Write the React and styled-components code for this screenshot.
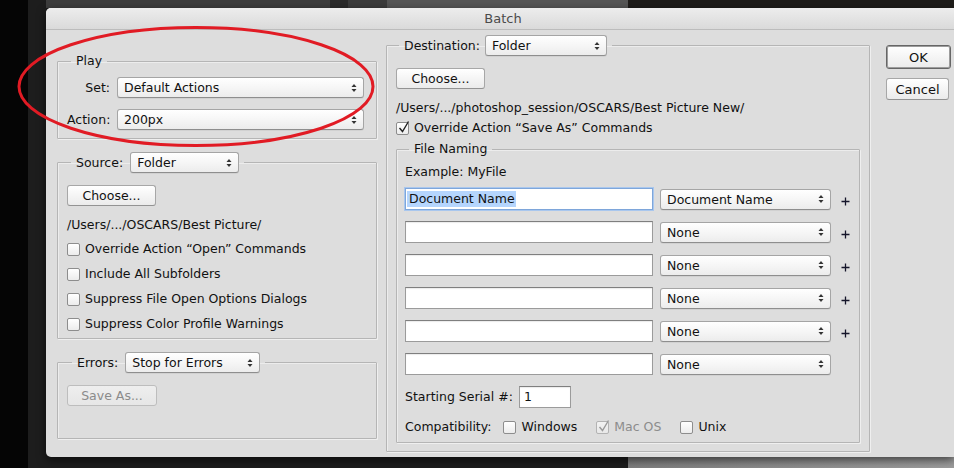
import React from "react";
import styled, { createGlobalStyle, css } from "styled-components";

const GlobalStyle = createGlobalStyle`
  html, body { margin: 0; padding: 0; background: #1d1d1d; }
  body { font-family: "DejaVu Sans", "Liberation Sans", sans-serif; font-size: 12.5px; color: #111; }
  * { box-sizing: border-box; }
`;

const Page = styled.div`
  position: relative;
  width: 954px;
  height: 468px;
  overflow: hidden;
  display: flex;
  flex-direction: column;
  background: linear-gradient(to right, #050505 0 28px, #1d1d1d 28px 628px, #7e7e7e 628px, #9d9d9d 954px);
`;

const TopStrip = styled.div`
  height: 8px;
  margin-left: 46px;
  display: flex;
`;

const Strip = styled.div`
  width: ${(p) => (p.$w ? `${p.$w}px` : "auto")};
  flex: ${(p) => (p.$w ? "none" : "1")};
  background: ${(p) => p.$bg};
`;

const Dialog = styled.div`
  margin-left: 46px;
  width: 908px;
  height: 449px;
  background: #dddddd;
  border-radius: 5px 0 0 5px;
  box-shadow: 0 3px 10px rgba(0, 0, 0, 0.6);
  display: flex;
  flex-direction: column;
  overflow: hidden;
`;

const TitleBar = styled.div`
  height: 22px;
  line-height: 21px;
  text-align: center;
  font-size: 13px;
  color: #4b4b4b;
  background: linear-gradient(#ededed, #dadada);
  border-bottom: 1px solid #bcbcbc;
  padding-left: 6px;
`;

const Body = styled.div`
  flex: 1;
  display: flex;
  align-items: flex-start;
  padding-left: 11px;
`;

const LeftColumn = styled.div`
  width: 320px;
  padding-top: 23px;
  display: flex;
  flex-direction: column;
  gap: 13px;
`;

const RightColumn = styled.div`
  width: 484px;
  margin-left: 9px;
  padding-top: 5px;
`;

const ButtonColumn = styled.div`
  margin-left: 16px;
  padding-top: 15px;
  display: flex;
  flex-direction: column;
  align-items: flex-start;
  gap: 9px;
`;

const Group = styled.fieldset`
  margin: 0;
  min-width: 0;
  border: 1px solid #b5b5b5;
  border-radius: 1px;
  box-shadow: 1px 1px 0 #efefef, inset 1px 1px 0 #ececec;
  padding: ${(p) => p.$pad};
  ${(p) => p.$mt && css`margin-top: ${p.$mt}px;`}
`;

const Legend = styled.legend`
  margin-left: ${(p) => p.$ml ?? 4}px;
  padding: 0 5px;
  line-height: 16px;
  display: flex;
  align-items: center;
  gap: ${(p) => p.$gap || 7}px;
`;

const FormGrid = styled.div`
  display: grid;
  grid-template-columns: 43px 1fr;
  column-gap: 7px;
  row-gap: 11px;
  align-items: center;
`;

const RightLabel = styled.span`
  text-align: right;
  line-height: 16px;
`;

const SelectBox = styled.div`
  position: relative;
  height: 21px;
  width: ${(p) => (p.$w ? `${p.$w}px` : "100%")};
  border: 1px solid #a5a5a5;
  border-bottom-color: #8e8e8e;
  border-radius: 3px;
  background: linear-gradient(#ffffff, #f5f5f5 55%, #ececec);
  box-shadow: 0 1px 0 rgba(0, 0, 0, 0.05);
  padding: 0 20px 0 6px;
  display: flex;
  align-items: center;
  white-space: nowrap;
  color: #111;
`;

const ArrowWrap = styled.span`
  position: absolute;
  right: 6px;
  top: 50%;
  transform: translateY(-50%);
  display: flex;
`;

const Arrows = () => (
  <ArrowWrap>
    <svg width="6" height="9" viewBox="0 0 6 9">
      <path d="M0.5 3.5 L3 0.5 L5.5 3.5 Z" fill="#333" />
      <path d="M0.5 5.5 L3 8.5 L5.5 5.5 Z" fill="#333" />
    </svg>
  </ArrowWrap>
);

const Select = ({ value, w }) => (
  <SelectBox $w={w}>
    {value}
    <Arrows />
  </SelectBox>
);

const Button = styled.div`
  width: ${(p) => p.$w}px;
  height: ${(p) => p.$h || 21}px;
  border: 1px solid #a7a7a7;
  border-bottom-color: #939393;
  border-radius: 3px;
  background: linear-gradient(#ffffff, #f3f3f3 60%, #ebebeb);
  display: flex;
  align-items: center;
  justify-content: center;
  font-size: ${(p) => p.$fs || 12.5}px;
  color: #111;
  ${(p) =>
    p.$disabled &&
    css`
      color: #8b8b8b;
      border-color: #bdbdbd;
      background: linear-gradient(#eeeeee, #e6e6e6);
    `}
  ${(p) =>
    p.$default &&
    css`
      border: 1px solid #666;
      box-shadow: inset 0 0 0 1px #9c9c9c;
    `}
`;

const Text = styled.div`
  line-height: 16px;
  margin-top: ${(p) => p.$mt || 0}px;
  padding-left: ${(p) => p.$pl || 0}px;
  color: ${(p) => (p.$muted ? "#8b8b8b" : "#111")};
  white-space: nowrap;
`;

const CheckList = styled.div`
  display: flex;
  flex-direction: column;
  gap: 9px;
  margin-top: ${(p) => p.$mt || 0}px;
`;

const CheckRow = styled.label`
  display: flex;
  align-items: center;
  gap: 5px;
  line-height: 16px;
  white-space: nowrap;
  color: ${(p) => (p.$disabled ? "#8c8c8c" : "#111")};
  margin-top: ${(p) => p.$mt || 0}px;
`;

const Box = styled.span`
  position: relative;
  width: 13px;
  height: 13px;
  flex: none;
  border: 1px solid ${(p) => (p.$disabled ? "#b3b3b3" : "#8d8d8d")};
  border-radius: 2px;
  background: ${(p) => (p.$disabled ? "linear-gradient(#f2f2f2, #e8e8e8)" : "linear-gradient(#ffffff, #ececec)")};
`;

const CheckMark = styled.svg`
  position: absolute;
  left: 1px;
  top: -3px;
`;

const Checkbox = ({ checked, disabled, children, mt }) => (
  <CheckRow $disabled={disabled} $mt={mt}>
    <Box $disabled={disabled}>
      {checked && (
        <CheckMark width="13" height="14" viewBox="0 0 13 14">
          <path
            d="M1.5 8 L4.5 11.5 L10.5 1.5"
            fill="none"
            stroke={disabled ? "#9a9a9a" : "#222"}
            strokeWidth="1.4"
          />
        </CheckMark>
      )}
    </Box>
    {children}
  </CheckRow>
);

const NamingGrid = styled.div`
  display: grid;
  grid-template-columns: 248px 171px auto;
  column-gap: 7px;
  row-gap: 11px;
  align-items: center;
  margin-top: 8px;
`;

const Field = styled.div`
  height: 22px;
  width: ${(p) => (p.$w ? `${p.$w}px` : "100%")};
  background: #fff;
  border: 1px solid #9b9b9b;
  border-top-color: #7f7f7f;
  box-shadow: inset 0 1px 1px rgba(0, 0, 0, 0.08);
  padding: 0 5px 0 1px;
  display: flex;
  align-items: center;
  white-space: nowrap;
  ${(p) =>
    p.$focused &&
    css`
      border-color: #7ea6da;
      box-shadow: 0 0 0 1px #a9c7ee;
    `}
`;

const Selection = styled.span`
  background: #b5d5fd;
  padding: 0 1px 0 2px;
  line-height: 16px;
`;

const PlusIcon = styled.svg`
  margin-left: 3px;
  margin-top: 4px;
`;

const Plus = () => (
  <PlusIcon width="9" height="9" viewBox="0 0 9 9">
    <path d="M4.5 0.5 V8.5 M0.5 4.5 H8.5" stroke="#15152a" strokeWidth="1.3" />
  </PlusIcon>
);

const InlineRow = styled.div`
  display: flex;
  align-items: center;
  gap: ${(p) => p.$gap}px;
  margin-top: ${(p) => p.$mt || 0}px;
  line-height: 16px;
  white-space: nowrap;
`;

const Compat = styled.div`
  display: flex;
  align-items: center;
  gap: 19px;
  margin-left: 12px;
`;

const Annotation = styled.svg`
  position: absolute;
  left: 0;
  top: 0;
  pointer-events: none;
`;

const namingRows = [
  { select: "Document Name", plus: true, focused: true },
  { select: "None", plus: true },
  { select: "None", plus: true },
  { select: "None", plus: true },
  { select: "None", plus: true },
  { select: "None", plus: false },
];

export default function App() {
  return (
    <Page>
      <GlobalStyle />
      <TopStrip>
        <Strip $w={284} $bg="#3d3d3d" />
        <Strip $w={18} $bg="#2b2b2b" />
        <Strip $w={39} $bg="#3c3c3c" />
        <Strip $w={241} $bg="#565656" />
        <Strip $bg="#1e1c1a" />
      </TopStrip>
      <Dialog>
        <TitleBar>Batch</TitleBar>
        <Body>
          <LeftColumn>
            <Group $pad="8px 12px 8px 9px">
              <Legend>Play</Legend>
              <FormGrid>
                <RightLabel>Set:</RightLabel>
                <Select value="Default Actions" />
                <RightLabel>Action:</RightLabel>
                <Select value="200px" />
              </FormGrid>
            </Group>

            <Group $pad="12px 12px 6px 9px">
              <Legend>
                Source:
                <Select value="Folder" w={109} />
              </Legend>
              <Button $w={89}>Choose...</Button>
              <Text $mt={11}>/Users/.../OSCARS/Best Picture/</Text>
              <CheckList $mt={8}>
                <Checkbox>Override Action “Open” Commands</Checkbox>
                <Checkbox>Include All Subfolders</Checkbox>
                <Checkbox>Suppress File Open Options Dialogs</Checkbox>
                <Checkbox>Suppress Color Profile Warnings</Checkbox>
              </CheckList>
            </Group>

            <Group $pad="12px 12px 32px 9px">
              <Legend $gap={7} $ml={5}>
                Errors:
                <Select value="Stop for Errors" w={135} />
              </Legend>
              <Button $w={90} $disabled>
                Save As...
              </Button>
            </Group>
          </LeftColumn>

          <RightColumn>
            <Group $pad="12px 9px 8px 9px">
              <Legend $gap={5} $ml={3}>
                Destination:
                <Select value="Folder" w={122} />
              </Legend>
              <Button $w={89}>Choose...</Button>
              <Text $mt={11}>/Users/.../photoshop_session/OSCARS/Best Picture New/</Text>
              <Checkbox checked mt={4}>
                Override Action “Save As” Commands
              </Checkbox>

              <Group $pad="7px 9px 7px 8px" $mt={5}>
                <Legend $ml={4}>File Naming</Legend>
                <Text>Example: MyFile</Text>
                <NamingGrid>
                  {namingRows.map((r, i) => (
                    <React.Fragment key={i}>
                      <Field $focused={r.focused}>
                        {r.focused && <Selection>Document Name</Selection>}
                      </Field>
                      <Select value={r.select} />
                      {r.plus ? <Plus /> : <span />}
                    </React.Fragment>
                  ))}
                </NamingGrid>
                <InlineRow $gap={6} $mt={11}>
                  Starting Serial #:
                  <Field $w={52}>
                    <Text $pl={3}>1</Text>
                  </Field>
                </InlineRow>
                <InlineRow $gap={0} $mt={11}>
                  Compatibility:
                  <Compat>
                    <Checkbox>Windows</Checkbox>
                    <Checkbox checked disabled>
                      Mac OS
                    </Checkbox>
                    <Checkbox>Unix</Checkbox>
                  </Compat>
                </InlineRow>
              </Group>
            </Group>
          </RightColumn>

          <ButtonColumn>
            <Button $w={65} $h={24} $fs={13} $default>
              OK
            </Button>
            <Button $w={63} $h={22} $fs={13}>
              Cancel
            </Button>
          </ButtonColumn>
        </Body>
      </Dialog>
      <Annotation width="954" height="468" viewBox="0 0 954 468">
        <ellipse cx="196" cy="86.5" rx="177" ry="59" fill="none" stroke="#e11b24" strokeWidth="3" />
      </Annotation>
    </Page>
  );
}
